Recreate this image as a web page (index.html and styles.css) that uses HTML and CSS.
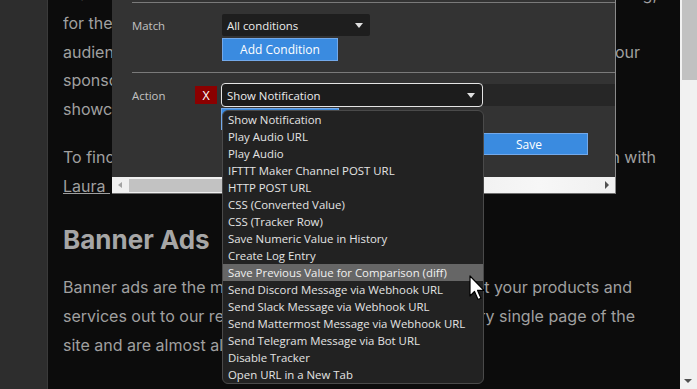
FILE: index.html
```html
<!DOCTYPE html>
<html>
<head>
<meta charset="utf-8">
<title>Banner Ads</title>
<link rel="stylesheet" href="styles.css">
</head>
<body>
<div class="page">
  <div class="gutter"></div>
  <main class="main">
    <div class="article">
      <div class="para first">
        <div class="line"><span class="l">brands</span><span class="r pr23">marketing,</span></div>
        <div class="line"><span class="l">for the</span></div>
        <div class="line"><span class="l">audience</span><span class="r pr40">your</span></div>
        <div class="line"><span class="l">sponsors</span></div>
        <div class="line"><span class="l">showcase</span></div>
      </div>
      <div class="para">
        <div class="line"><span class="l">To find</span><span class="r pr24">in with</span></div>
        <div class="line"><span class="l"><a class="link" href="#">Laura </a></span></div>
      </div>
      <h2 class="heading">Banner Ads</h2>
      <div class="para">
        <div class="line"><span class="l">Banner ads are the most</span><span class="r pr48">out your products and</span></div>
        <div class="line"><span class="l">services out to our readers</span><span class="r pr45">every single page of the</span></div>
        <div class="line"><span class="l">site and are almost always</span></div>
      </div>
    </div>

    <div class="modal">
      <div class="mbody">
        <div class="hr"></div>
        <div class="row match">
          <span class="lbl">Match</span>
          <div class="sel sel-match"><span>All conditions</span><span class="caret"></span></div>
        </div>
        <div class="btn add">Add Condition</div>
        <div class="hr hr2"></div>
        <div class="row action">
          <span class="lbl2">Action</span>
          <div class="xbtn">X</div>
          <div class="selwrap">
            <div class="sel sel-action"><span>Show Notification</span><span class="caret"></span></div>
          </div>
        </div>
        <div class="btn blue2"></div>
        <div class="saverow"><div class="btn save">Save</div></div>
      </div>
      <div class="hscroll">
        <span class="arr-left"></span>
        <div class="hthumb"></div>
        <span class="arr-right"></span>
      </div>
    </div>

    <div class="dd">
      <div class="opt">Show Notification</div>
      <div class="opt">Play Audio URL</div>
      <div class="opt">Play Audio</div>
      <div class="opt">IFTTT Maker Channel POST URL</div>
      <div class="opt">HTTP POST URL</div>
      <div class="opt">CSS (Converted Value)</div>
      <div class="opt">CSS (Tracker Row)</div>
      <div class="opt">Save Numeric Value in History</div>
      <div class="opt">Create Log Entry</div>
      <div class="opt hl">Save Previous Value for Comparison (diff)</div>
      <div class="opt">Send Discord Message via Webhook URL</div>
      <div class="opt">Send Slack Message via Webhook URL</div>
      <div class="opt">Send Mattermost Message via Webhook URL</div>
      <div class="opt">Send Telegram Message via Bot URL</div>
      <div class="opt">Disable Tracker</div>
      <div class="opt">Open URL in a New Tab</div>
    </div>

    <svg class="cursor" width="18" height="27" viewBox="0 0 18 27">
      <path d="M1 1 L1 21 L5.5 16.5 L9 24.5 L12 23.2 L8.6 15.4 L15 15.4 Z" fill="#fff" stroke="#000" stroke-width="1.2" stroke-linejoin="round"/>
    </svg>
  </main>
  <div class="vscroll">
    <div class="vthumb"></div>
    <span class="arr-down"></span>
  </div>
</div>
</body>
</html>
```

FILE: styles.css
```css
html, body {
  margin: 0;
  padding: 0;
  background: #0c0c0c;
}

.page {
  display: flex;
  height: 389px;
  overflow: hidden;
}

.gutter {
  width: 47px;
  flex: none;
  background: #2d2d2d;
  border-right: 1px solid #3a3a3a;
}

.main {
  position: relative;
  flex: 1;
  min-width: 0;
  background: #0c0c0c;
  overflow: hidden;
}

.article {
  margin-top: -20px;
  padding-left: 15px;
  font-family: Inter, "Liberation Sans", sans-serif;
  font-size: 16px;
  line-height: 28.8px;
  color: #a0a0a0;
}

.para {
  margin-top: 19.2px;
}

.para.first {
  margin-top: 0;
}

.line {
  display: flex;
  white-space: nowrap;
}

.line .l {
  flex: 0 1 auto;
  min-width: 0;
  overflow: hidden;
}

.line .r {
  flex: none;
  margin-left: auto;
}

.pr23 { padding-right: 23px; }
.pr24 { padding-right: 24px; }
.pr40 { padding-right: 40px; }
.pr45 { padding-right: 45px; }
.pr48 { padding-right: 48px; }

.link {
  color: #a0a0a0;
  text-decoration: underline;
  white-space: pre;
}

.heading {
  margin: 23.6px 0 -1.6px 0;
  font-size: 26px;
  line-height: 31.2px;
  font-weight: 700;
  color: #a6a6a6;
}

/* modal */
.modal {
  position: absolute;
  left: 64px;
  top: 0;
  width: 503px;
  height: 193px;
  background: #333333;
  border-right: 1px solid #8a8a8a;
  border-bottom: 1px solid #6e6e6e;
  display: flex;
  flex-direction: column;
  font-family: "Open Sans", "Noto Sans", sans-serif;
  font-size: 11.4px;
  color: #c2c2c2;
}

.mbody {
  flex: 1;
  padding-left: 20px;
  display: flex;
  flex-direction: column;
}

.hr {
  height: 1px;
  background: #7a7a7a;
  margin-top: 2px;
}

.hr2 {
  margin-top: 11px;
}

.row {
  display: flex;
  align-items: center;
}

.match {
  margin-top: 11px;
  height: 22px;
}

.lbl {
  width: 90px;
  flex: none;
}

.sel {
  display: flex;
  align-items: center;
  box-sizing: border-box;
  padding-left: 5px;
  padding-right: 7px;
  color: #ececec;
  background: #1e1e1e;
}

.sel-match {
  width: 148px;
  height: 22px;
  border-radius: 2px;
}

.caret {
  margin-left: auto;
  width: 0;
  height: 0;
  border-left: 4.5px solid transparent;
  border-right: 4.5px solid transparent;
  border-top: 5px solid #e0e0e0;
}

.btn {
  display: flex;
  align-items: center;
  justify-content: center;
  box-sizing: border-box;
  background: #3a8be0;
  border: 1px solid #73a9ea;
  color: #ffffff;
  font-size: 12px;
}

.add {
  margin-left: 90px;
  margin-top: 2px;
  width: 116px;
  height: 23px;
}

.action {
  margin-top: 10px;
  height: 24px;
}

.lbl2 {
  width: 63px;
  flex: none;
}

.xbtn {
  width: 22px;
  height: 18px;
  flex: none;
  margin-right: 4px;
  background: #8b0000;
  color: #ffffff;
  display: flex;
  align-items: center;
  justify-content: center;
  font-size: 12.5px;
}

.selwrap {
  flex: 1;
  height: 22px;
  background: #262626;
  display: flex;
  align-items: center;
}

.sel-action {
  width: 262px;
  height: 24px;
  flex: none;
  border: 1px solid #e4e4e4;
  border-radius: 4px;
  padding-left: 5px;
  background: #1c1c1c;
}

.blue2 {
  margin-left: 89px;
  margin-top: 1px;
  width: 118px;
  height: 22px;
}

.saverow {
  margin-top: 3px;
  display: flex;
  justify-content: flex-end;
  padding-right: 27px;
}

.save {
  width: 118px;
  height: 22px;
  font-size: 12px;
}

.hscroll {
  height: 16px;
  background: linear-gradient(to right, #f0f0f0 70%, #f7f7f7 85%, #f0f0f0);
  display: flex;
  align-items: center;
  flex: none;
}

.arr-left {
  margin-left: 6px;
  width: 0;
  height: 0;
  border-top: 3.5px solid transparent;
  border-bottom: 3.5px solid transparent;
  border-right: 4px solid #a3a3a3;
}

.hthumb {
  margin-left: 7px;
  width: 300px;
  height: 13px;
  background: #c2c2c2;
}

.arr-right {
  margin-left: auto;
  margin-right: 6px;
  width: 0;
  height: 0;
  border-top: 4px solid transparent;
  border-bottom: 4px solid transparent;
  border-left: 4px solid #505050;
}

/* dropdown list */
.dd {
  position: absolute;
  left: 174px;
  top: 110px;
  width: 262px;
  box-sizing: border-box;
  border: 1px solid #4a4a4a;
  border-radius: 6px;
  background: #222222;
  overflow: hidden;
  font-family: "Open Sans", "Noto Sans", sans-serif;
  font-size: 11.4px;
  color: #e4e4e4;
}

.opt {
  height: 17px;
  line-height: 17px;
  padding-left: 5px;
  white-space: nowrap;
}

.opt.hl {
  background: #666666;
  color: #f0f0f0;
}

.cursor {
  position: absolute;
  left: 421px;
  top: 275px;
}

/* page scrollbar */
.vscroll {
  width: 17px;
  flex: none;
  background: #f1f1f1;
  display: flex;
  flex-direction: column;
  align-items: flex-start;
}

.vthumb {
  margin-left: 2px;
  width: 15px;
  height: 80px;
  background: #c1c1c1;
}

.arr-down {
  margin-top: auto;
  margin-bottom: 6px;
  margin-left: 4px;
  width: 0;
  height: 0;
  border-left: 4px solid transparent;
  border-right: 4px solid transparent;
  border-top: 4px solid #505050;
}
```
